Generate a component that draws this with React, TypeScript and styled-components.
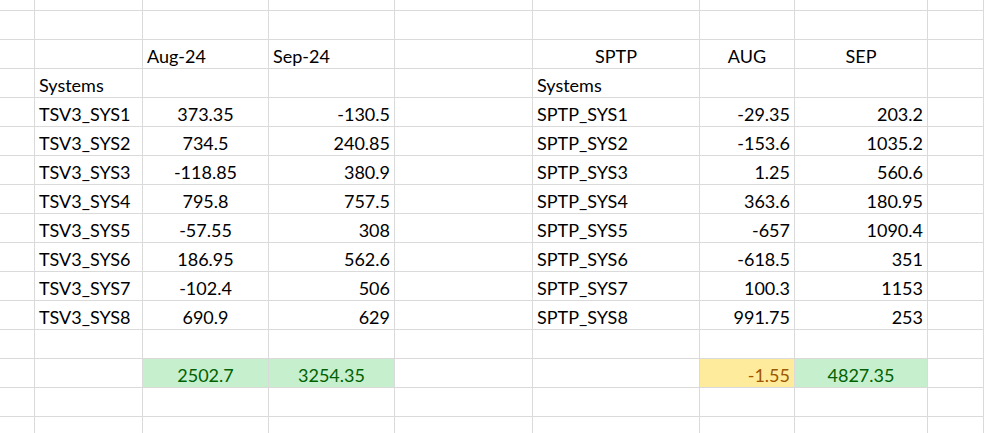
import React from 'react'
import styled, { createGlobalStyle } from 'styled-components'

const Global = createGlobalStyle`
  body { margin: 0; background: #fff; overflow: hidden; }
`

const Sheet = styled.div`
  display: grid;
  grid-template-columns: 35px 108px 126px 126px 138px 167px 95px 133px 56px;
  grid-auto-rows: 29px;
  margin-top: -18px;
  font-family: Lato, 'Liberation Sans', sans-serif;
  font-size: 18px;
  color: #000;
`

type Align = 'left' | 'center' | 'right'
type Fill = 'none' | 'good' | 'neutral'

const fills = {
  none: { bg: '#fff', fg: '#000' },
  good: { bg: '#c6efce', fg: '#006100' },
  neutral: { bg: '#ffeb9c', fg: '#9c5700' },
}

const Cell = styled.div<{ $align: Align; $fill: Fill }>`
  box-sizing: border-box;
  border-right: 1px solid #dadada;
  border-bottom: 1px solid #dadada;
  display: flex;
  align-items: flex-end;
  padding: 0 4px 1px;
  justify-content: ${(p) =>
    p.$align === 'left' ? 'flex-start' : p.$align === 'right' ? 'flex-end' : 'center'};
  background: ${(p) => fills[p.$fill].bg};
  color: ${(p) => fills[p.$fill].fg};
  white-space: nowrap;
`

type C = [string, Align?, Fill?]

const left = [373.35, 734.5, -118.85, 795.8, -57.55, 186.95, -102.4, 690.9]
const sep = [-130.5, 240.85, 380.9, 757.5, 308, 562.6, 506, 629]
const aug = [-29.35, -153.6, 1.25, 363.6, -657, -618.5, 100.3, 991.75]
const sep2 = [203.2, 1035.2, 560.6, 180.95, 1090.4, 351, 1153, 253]

const blank = (n: number): C[] => Array.from({ length: n }, () => [''] as C)

const rows: C[][] = [
  blank(9),
  blank(9),
  [[''], ['', 'left'], ['Aug-24', 'left'], ['Sep-24', 'left'], [''], ['SPTP', 'center'], ['AUG', 'center'], ['SEP', 'center'], ['']],
  [[''], ['Systems', 'left'], [''], [''], [''], ['Systems', 'left'], [''], [''], ['']],
  ...left.map((v, i): C[] => [
    [''],
    [`TSV3_SYS${i + 1}`, 'left'],
    [String(v), 'center'],
    [String(sep[i]), 'right'],
    [''],
    [`SPTP_SYS${i + 1}`, 'left'],
    [String(aug[i]), 'right'],
    [String(sep2[i]), 'right'],
    [''],
  ]),
  blank(9),
  [[''], [''], ['2502.7', 'center', 'good'], ['3254.35', 'center', 'good'], [''], [''], ['-1.55', 'right', 'neutral'], ['4827.35', 'center', 'good'], ['']],
  blank(9),
  blank(9),
]

export default function App() {
  return (
    <>
      <Global />
      <Sheet>
        {rows.map((row, r) =>
          row.map(([text, align = 'left', fill = 'none'], c) => (
            <Cell key={`${r}-${c}`} $align={align} $fill={fill}>
              {text}
            </Cell>
          ))
        )}
      </Sheet>
    </>
  )
}
